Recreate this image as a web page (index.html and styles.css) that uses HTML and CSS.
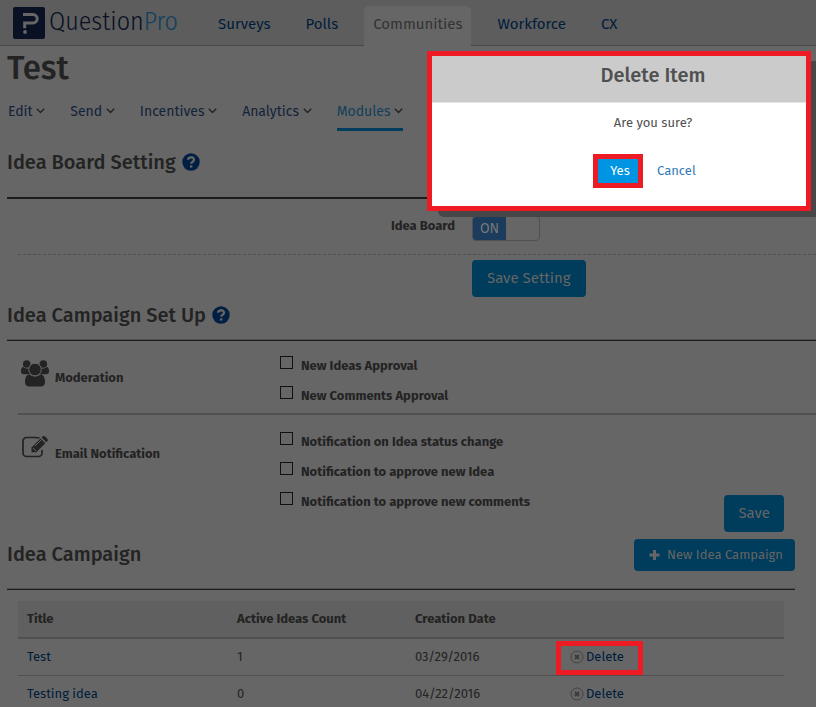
FILE: index.html
```html
<!DOCTYPE html>
<html lang="en">
<head>
<meta charset="utf-8">
<title>QuestionPro - Test</title>
<link rel="stylesheet" href="styles.css">
</head>
<body>
<svg class="defs" aria-hidden="true">
  <symbol id="chev" viewBox="0 0 9 6"><path d="M.8.800 4.500 4.500 8.200.800" fill="none" stroke="currentColor" stroke-width="1.400"/></symbol>
  <symbol id="help" viewBox="0 0 18 18"><circle cx="9" cy="9" r="8.700" fill="#001f42"/><path d="M6 6.800C6.200 3.500 12 3.400 12 6.700c0 2-2.800 2-2.800 4" fill="none" stroke="#666" stroke-width="2.300"/><path d="M8 12.300h2.400v2.300H8z" fill="#666"/></symbol>
  <symbol id="remove" viewBox="0 0 14 14"><circle cx="7" cy="7" r="6" fill="none" stroke="#424242"/><path d="m5 5 4 4m0-4-4 4" stroke="#3a3a3a" stroke-width="1.800"/></symbol>
</svg>
<header class="topbar">
  <a class="logo" href="#">
    <svg width="32" height="32" viewBox="0 0 32 32" aria-hidden="true"><rect width="32" height="32" rx="2" fill="#0a1124"/><path d="M10 7.500h10a4.200 4.200 0 0 1 0 8.400h-8.300v5.300" fill="none" stroke="#666" stroke-width="3"/><circle cx="12" cy="25" r="1.900" fill="#666"/></svg>
    <span class="logo-name">Question<span class="logo-pro">Pro</span></span>
  </a>
  <nav class="products">
    <a href="#">Surveys</a><a href="#">Polls</a><a class="current" href="#">Communities</a><a href="#">Workforce</a><a href="#">CX</a>
  </nav>
</header>
<main>
  <h1>Test</h1>
  <nav class="tabs">
    <a href="#">Edit <svg class="chev"><use href="#chev"/></svg></a>
    <a href="#">Send <svg class="chev"><use href="#chev"/></svg></a>
    <a href="#">Incentives <svg class="chev"><use href="#chev"/></svg></a>
    <a href="#">Analytics <svg class="chev"><use href="#chev"/></svg></a>
    <a class="active" href="#">Modules <svg class="chev"><use href="#chev"/></svg></a>
  </nav>

  <section>
    <h2 class="board-title">Idea Board Setting <svg class="help"><use href="#help"/></svg></h2>
    <div class="setting">
      <span id="board-label" class="setting-label">Idea Board</span>
      <button class="toggle" type="button" role="switch" aria-checked="true" aria-labelledby="board-label"><span>ON</span></button>
    </div>
    <div class="setting-action"><button class="btn" type="button">Save Setting</button></div>
  </section>

  <section>
    <h2 class="setup-title">Idea Campaign Set Up <svg class="help"><use href="#help"/></svg></h2>
    <div class="group moderation">
      <div class="group-name">
        <svg width="28" height="27" viewBox="0 0 28 27" fill="#232323" aria-hidden="true"><circle cx="5.700" cy="4" r="3.800"/><circle cx="22.300" cy="4" r="3.800"/><path d="M0 11.500C0 8.500.8 7 2.300 7c2 1.600 4 1.900 6 1.200-.3 2.400.3 4.300 1.800 6H3c-2 0-3-1-3-2.700zM28 11.500c0-3-.8-4.500-2.300-4.500-2 1.600-4 1.900-6 1.200.3 2.400-.3 4.300-1.800 6H25c2 0 3-1 3-2.700z"/><circle cx="14" cy="9.500" r="6.300" stroke="#666"/><path d="M4 22c0-4.500 1.500-7.500 4.600-7.500 3.400 2.700 7.400 2.700 10.800 0 3.100 0 4.600 3 4.600 7.500 0 3-1.800 4.500-4.500 4.500h-11C5.800 26.500 4 25 4 22z"/></svg>
        <span>Moderation</span>
      </div>
      <div class="checks">
        <label><input type="checkbox">New Ideas Approval</label>
        <label><input type="checkbox">New Comments Approval</label>
      </div>
    </div>
    <div class="group notification">
      <div class="group-name">
        <svg width="28" height="22" viewBox="0 0 28 22" aria-hidden="true"><path d="M18.500 2C17 1.500 16 1.500 14 1.500H5.500a3.500 3.500 0 0 0-3.500 3.500v12a3.500 3.500 0 0 0 3.500 3.500H17.500a3.500 3.500 0 0 0 3.500-3.500V14" fill="none" stroke="#232323" stroke-width="1.700"/><path d="m10.500 11.500 9-9 4.800 4.800-9 9h-4.800z" fill="#232323"/><path d="m20.500 1.500 1-1c.8-.8 1.800-.8 2.600 0l2.200 2.200c.8.800.8 1.800 0 2.600l-1 1z" fill="#232323"/><path d="m12 12 3 3m-1-5 6-6" stroke="#666"/></svg>
        <span>Email Notification</span>
      </div>
      <div class="checks">
        <label><input type="checkbox">Notification on Idea status change</label>
        <label><input type="checkbox">Notification to approve new Idea</label>
        <label><input type="checkbox">Notification to approve new comments</label>
      </div>
      <button class="btn" type="button">Save</button>
    </div>
  </section>

  <section class="campaigns">
    <div class="campaign-head">
      <h2>Idea Campaign</h2>
      <button class="btn small" type="button"><svg width="11" height="11" viewBox="0 0 11 11" aria-hidden="true"><path d="M5.500 0v10M.5 5h10" stroke="currentColor" stroke-width="3"/></svg>New Idea Campaign</button>
    </div>
    <table>
      <thead><tr><th class="c-title">Title</th><th class="c-count">Active Ideas Count</th><th class="c-date">Creation Date</th><th aria-label="Actions"></th></tr></thead>
      <tbody>
        <tr><td><a href="#">Test</a></td><td>1</td><td>03/29/2016</td><td><a class="delete marked" href="#"><svg width="14" height="14"><use href="#remove"/></svg>Delete</a></td></tr>
        <tr><td><a href="#">Testing idea</a></td><td>0</td><td>04/22/2016</td><td><a class="delete" href="#"><svg width="14" height="14"><use href="#remove"/></svg>Delete</a></td></tr>
      </tbody>
    </table>
  </section>
</main>

<div class="modal" role="dialog" aria-labelledby="modal-title">
  <div class="modal-panel">
    <h3 id="modal-title">Delete Item</h3>
    <div class="modal-body">
      <p>Are you sure?</p>
      <div class="modal-actions"><button class="yes" type="button">Yes</button><a href="#">Cancel</a></div>
    </div>
  </div>
</div>
</body>
</html>
```
FILE: styles.css
```css
* { box-sizing: border-box; }
body { margin: 0; background: #666; color: #232323; font: 13px/20px "Fira Sans", "Noto Sans", sans-serif; }
a { color: #001c3b; text-decoration: none; }
button { font: inherit; border: 0; }
h1, h2, h3, p { margin: 0; }
.defs { position: absolute; width: 0; height: 0; }

.topbar { display: flex; height: 46px; background: #5d5d5d; border-bottom: 1px solid #484848; }
.logo { display: flex; align-items: center; width: 209px; padding-left: 13px; gap: 4px; }
.logo-name { font: 300 26px/30px "Fira Sans Condensed", "Roboto", sans-serif; color: #0a1124; padding-bottom: 2px; }
.logo-pro { color: #12415f; }
.products { display: flex; align-items: flex-end; gap: 17px; margin-bottom: -1px; }
.products a { padding: 0 9px; font-size: 15px; line-height: 36px; padding-bottom: 4px; }
.products .current { color: #333; background: #666; border-radius: 5px 5px 0 0; }

main { padding-left: 7px; }
h1 { font-size: 33px; line-height: 44px; font-weight: 500; }
.tabs { display: flex; gap: 25px; margin-top: 12px; padding-left: 1px; }
.tabs a { font-size: 14px; color: #12233a; padding-bottom: 6px; border-bottom: 3px solid transparent; }
.tabs .active { color: #123f5c; border-color: #003c5b; }
.chev { width: 9px; height: 6px; color: #232323; margin-bottom: 2px; }

h2 { font-size: 20px; line-height: 28px; font-weight: 500; }
.help { width: 18px; height: 18px; margin-left: 1px; vertical-align: -2px; }
.board-title { margin-top: 17px; padding-bottom: 21px; border-bottom: 2px solid #1c1c1c; }
.setting { display: flex; gap: 17px; height: 56px; margin-left: 11px; padding-top: 17px; border-bottom: 1px dashed #505050; }
.setting-label { width: 437px; text-align: right; font-weight: 700; }
.toggle { display: flex; width: 68px; height: 25px; padding: 0; border: 1px solid #505050; border-radius: 4px; background: none; overflow: hidden; }
.toggle span { width: 50%; background: #1b3c5c; color: #777; font-size: 14px; line-height: 23px; }
.setting-action { padding: 5px 0 4px 465px; }
.btn { height: 37px; padding: 0 14px 2px; border-radius: 4px; background: #003c5b; color: #666; font-size: 15px; }
.setting-action .btn { padding: 0 15px 2px; }
.btn.small { display: flex; align-items: center; gap: 7px; height: 32px; padding: 0 12px 0 15px; font-size: 13px; }

.setup-title, .campaign-head { border-bottom: 1px solid #1c1c1c; box-shadow: inset 0 -1px #505050; }
.setup-title { padding-bottom: 11px; }
.group { display: flex; margin-left: 11px; }
.moderation { height: 74px; padding-top: 15px; border-bottom: 2px solid #505050; }
.notification { padding-top: 17px; height: 117px; }
.notification .btn { align-self: flex-end; margin: 0 32px 0 auto; }
.group-name { display: flex; align-items: flex-start; width: 262px; gap: 6px; padding-left: 3px; font-weight: 700; }
.group-name svg { margin-top: 4px; }
.group-name span { margin-top: 12px; }
.checks { display: flex; flex-direction: column; gap: 10px; font-weight: 700; }
.checks label { display: flex; gap: 8px; }
.checks input { appearance: none; width: 13px; height: 13px; margin: 0; border: 1px solid #101010; }

.campaigns { margin-right: 21px; }
.campaign-head { display: flex; justify-content: space-between; align-items: flex-start; padding: 7px 0 18px; }
.campaign-head h2 { margin-top: 1px; }
table { width: calc(100% - 22px); margin: 11px 11px 0; border-collapse: separate; border-spacing: 0; table-layout: fixed; }
th, td { padding: 8px 9px; text-align: left; border-bottom: 1px solid #505050; }
th { background: #606060; border-bottom-width: 2px; font-weight: 700; }
.c-title { width: 210px; }
.c-count { width: 178px; }
.c-date { width: 155px; }
.delete { position: relative; display: inline-flex; align-items: center; gap: 2px; vertical-align: top; }
.marked::after { content: ""; position: absolute; inset: -6px -19px -8px -14px; border: 5px solid #ed1c24; }

.modal { position: absolute; top: 51px; right: 5px; width: 384px; }
.modal::before { content: ""; position: absolute; inset: 10px -5px -6px 11px; background: #474747; border-radius: 6px 0 0 6px; }
.modal-panel { position: relative; border: 5px solid #ed1c24; background: #fff; color: #505050; text-align: center; }
h3 { padding: 4px 0 12px 68px; background: #cbcbcb; border-bottom: 1px solid #e5e5e5; font-size: 20px; line-height: 30px; font-weight: 500; }
.modal-body { padding: 10px 0 18px 68px; }
.modal-actions { display: flex; align-items: center; gap: 14px; margin-top: 21px; padding-left: 93px; }
.modal-actions a { color: #337ab7; }
.yes { width: 50px; height: 34px; padding: 0 0 0 4px; border: 5px solid #ed1c24; background: #0095e2; color: #fff; }
```
